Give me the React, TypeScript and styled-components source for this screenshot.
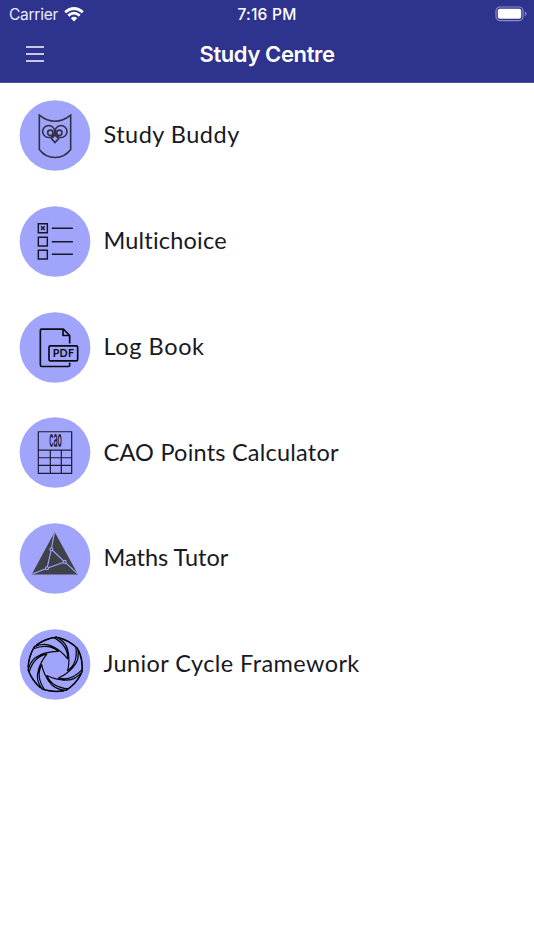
import React from "react";
import styled, { createGlobalStyle } from "styled-components";

const Global = createGlobalStyle`
  * { box-sizing: border-box; }
  body { margin: 0; background: #fff; }
`;
const Screen = styled.div`
  width: 534px;
  height: 950px;
  overflow: hidden;
  background: #fff;
`;
const Header = styled.header`
  height: 83px;
  background: #2e338e;
  border-bottom: 1px solid #4b4f9c;
  color: #fff;
  font-family: Inter, sans-serif;
`;
const StatusBar = styled.div`
  display: grid;
  grid-template-columns: 1fr auto 1fr;
  align-items: center;
  height: 27px;
  padding: 0 7px 0 9px;
  font-size: 15.5px;
  line-height: 27px;
`;
const Carrier = styled.div`
  display: flex;
  align-items: center;
  gap: 6px;
  color: #eceefa;
  letter-spacing: -0.25px;
`;
const StatusText = styled.span`
  padding-top: 1px;
`;
const Time = styled(StatusText)`
  font-weight: 500;
  letter-spacing: 0.25px;
  margin-left: -2px;
`;
const Battery = styled.svg`
  justify-self: end;
  display: block;
`;
const NavBar = styled.div`
  display: grid;
  grid-template-columns: 1fr auto 1fr;
  align-items: center;
  height: 54px;
  padding: 0 26px;
`;
const MenuButton = styled.button`
  display: flex;
  flex-direction: column;
  gap: 5px;
  width: 18px;
  padding: 0;
  border: 0;
  background: none;
`;
const MenuLine = styled.span`
  height: 2px;
  background: #c6c8e4;
`;
const Title = styled.h1`
  margin: 0;
  font-size: 22px;
  font-weight: 600;
  line-height: 30px;
  letter-spacing: -0.38px;
`;
const List = styled.ul`
  margin: 0;
  padding: 17px 0 0 19px;
  list-style: none;
  display: flex;
  flex-direction: column;
  gap: 34.8px;
`;
const Row = styled.li`
  display: flex;
  align-items: center;
  gap: 12.5px;
  height: 71px;
`;
const Disc = styled.svg`
  flex: none;
  width: 72px;
  height: 71px;
`;
const Label = styled.span<{ $track: number }>`
  margin-top: -2.6px;
  font-family: Lato, sans-serif;
  font-size: 23.5px;
  line-height: 32px;
  letter-spacing: ${(p) => p.$track}px;
  color: #171923;
  white-space: nowrap;
`;

const Owl = () => (
  <g fill="none" stroke="#303048" strokeWidth="4.8">
    <path d="M73 60Q120 97 167 60V163Q149 187 120 187T73 163Z" />
    <circle cx="101" cy="109" r="18" />
    <circle cx="138" cy="109" r="18" />
    <circle cx="106" cy="113" r="8" />
    <circle cx="133" cy="113" r="8" />
    <path d="M120 120L131 130L120 142L109 130Z" fill="#a0a4fa" />
  </g>
);
const Checklist = () => (
  <g fill="none" stroke="#17172b" strokeWidth="4.4">
    <path d="M70 67H97V94H70ZM70 108H97V134H70ZM70 147H97V173H70Z" />
    <path d="M78 75L89 86M89 75L78 86" />
    <path d="M112 81H172M112 121H172M112 159H172" strokeLinecap="round" />
  </g>
);
const Pdf = () => (
  <g fill="none" stroke="#0b0b16" strokeWidth="5" strokeLinejoin="round">
    <path d="M164 108V84L145 65H80Q76 65 76 69V172Q76 177 80 177H160Q164 177 164 173V166" />
    <path d="M144 66V84H163" />
    <rect x="102" y="115" width="86" height="45" rx="4" />
    <text x="145" y="149" textAnchor="middle" textLength="64" fontFamily="Lato, sans-serif" fontWeight="700" fontSize="32" fill="#0b0b16" stroke="none">PDF</text>
  </g>
);
const Cao = () => (
  <g fill="none" stroke="#1d1d38" strokeWidth="3.6">
    <path d="M70 57H170V182H70ZM70 112H170M70 135H170M70 158H170M106 112V182M139 112V182" />
    <text transform="translate(121.5 103) scale(.43 1.38)" textAnchor="middle" fontFamily="Inter, sans-serif" fontWeight="600" fontSize="50" fill="#1d1d38" stroke="none">cao</text>
  </g>
);
const Maths = () => (
  <g fill="none" stroke="#a0a4fa" strokeWidth="3.4">
    <path d="M119 39L189 167H50Z" fill="#3e4147" stroke="none" />
    <path d="M118 42L109 91L149 129L188 165M109 91L96 148L52 165M96 148L149 129" />
    <circle cx="109" cy="91" r="4.5" fill="#3e4147" />
    <circle cx="149" cy="129" r="4.5" fill="#3e4147" />
    <circle cx="96" cy="148" r="4.5" fill="#3e4147" />
  </g>
);
const BLADES = 7;
const Aperture = () => (
  <g fill="none" stroke="#060609" strokeWidth="3.6" strokeLinejoin="round">
    {Array.from({ length: BLADES }, (_, i) => (
      <path
        key={i}
        transform={`translate(121 119) rotate(${(i * 360) / BLADES})`}
        d="M-82 8Q-81 -26 -63 -54Q-34 -77 4 -83M-63 -54Q-20 -74 9 -40Q-20 -66 -66 -48M9 -40Q-22 -40 -46 -29"
      />
    ))}
  </g>
);

const items = [
  { label: "Study Buddy", top: 15.6, track: 0.48, Icon: Owl },
  { label: "Multichoice", top: 15, track: 0.2, Icon: Checklist },
  { label: "Log Book", top: 14.4, track: 0.6, Icon: Pdf },
  { label: "CAO Points Calculator", top: 13.8, track: 0.22, Icon: Cao },
  { label: "Maths Tutor", top: 13.2, track: 0, Icon: Maths },
  { label: "Junior Cycle Framework", top: 12.6, track: 0.41, Icon: Aperture },
];

export default function App() {
  return (
    <Screen>
      <Global />
      <Header>
        <StatusBar>
          <Carrier>
            <StatusText>Carrier</StatusText>
            <svg width="20" height="15" viewBox="0 0 20 15" fill="none" stroke="#fff" strokeWidth="2.8">
              <path d="M1.2 5.2Q10-2.2 18.8 5.2M4.3 8.6Q10 3.6 15.7 8.6" />
              <path d="M6.8 11.2Q10 8.4 13.2 11.2L10 14.4Z" fill="#fff" stroke="none" />
            </svg>
          </Carrier>
          <Time>7:16 PM</Time>
          <Battery width="32" height="16" viewBox="0 0 32 16">
            <rect x="1" y="1" width="27" height="13.6" rx="4" fill="none" stroke="#8a8dc3" strokeWidth="1.2" />
            <rect x="2.8" y="2.8" width="23.4" height="10" rx="2" fill="#fff" />
            <path d="M29.8 5.5Q31.5 6 31.5 7.8T29.8 10.1Z" fill="#8a8dc3" />
          </Battery>
        </StatusBar>
        <NavBar>
          <MenuButton aria-label="Menu"><MenuLine /><MenuLine /><MenuLine /></MenuButton>
          <Title>Study Centre</Title>
        </NavBar>
      </Header>
      <List>
        {items.map(({ label, top, track, Icon }) => (
          <Row key={label}>
            <Disc viewBox={`12 ${top - 1} 216 213`}>
              <circle cx="120" cy={top + 105.5} r="106" fill="#a0a4fa" />
              <Icon />
            </Disc>
            <Label $track={track}>{label}</Label>
          </Row>
        ))}
      </List>
    </Screen>
  );
}
